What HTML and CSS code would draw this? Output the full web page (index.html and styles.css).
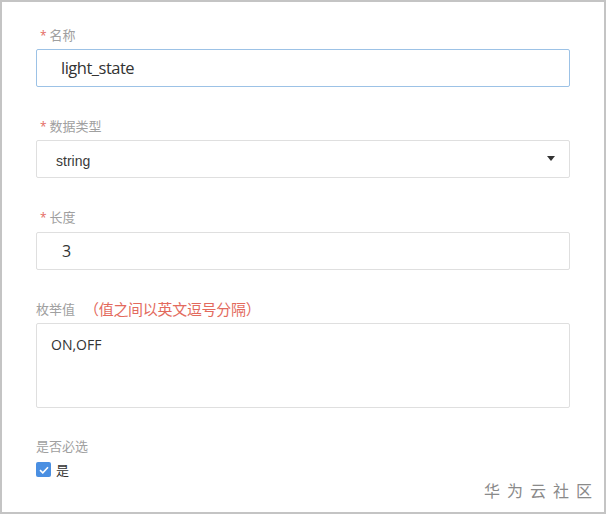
FILE: index.html
```html
<!DOCTYPE html>
<html lang="zh">
<head>
<meta charset="utf-8">
<link rel="stylesheet" href="styles.css">
</head>
<body>
<div class="frame">
  <div class="field">
    <div class="label"><span class="req">*</span>名称</div>
    <div class="input focused"><span class="value big">light_state</span></div>
  </div>
  <div class="field">
    <div class="label"><span class="req">*</span>数据类型</div>
    <div class="input select"><span class="value sel">string</span><span class="caret"></span></div>
  </div>
  <div class="field wide">
    <div class="label"><span class="req">*</span>长度</div>
    <div class="input"><span class="value num">3</span></div>
  </div>
  <div class="field">
    <div class="label">枚举值<span class="hint">（值之间以英文逗号分隔）</span></div>
    <div class="input area"><span class="value enum">ON,OFF</span></div>
  </div>
  <div class="field last">
    <div class="label">是否必选</div>
    <label class="check">
      <span class="box"><svg width="10" height="8" viewBox="0 0 10 8"><path d="M1 4.2 L3.8 6.8 L9 1.2" fill="none" stroke="#fff" stroke-width="1.6"/></svg></span>
      <span class="check-text">是</span>
    </label>
  </div>
  <div class="watermark">华为云社区</div>
</div>
</body>
</html>
```

FILE: styles.css
```css
html, body {
  margin: 0;
  padding: 0;
  background: #fff;
}
.frame {
  position: relative;
  box-sizing: border-box;
  width: 606px;
  height: 514px;
  border: 2px solid #c4c4c4;
  padding: 24px 34px 0 34px;
  font-family: "Noto Sans CJK SC", "Open Sans", sans-serif;
  display: flex;
  flex-direction: column;
  gap: 30px;
}
.field {
  display: flex;
  flex-direction: column;
  gap: 5px;
}
.field.wide {
  gap: 6px;
}
.label {
  height: 18px;
  line-height: 18px;
  font-size: 13px;
  color: #a0a0a0;
  display: flex;
  align-items: center;
}
.req {
  color: #e46a62;
  font-family: "Open Sans", sans-serif;
  font-size: 12px;
  margin: 0 3px 0 4px;
  position: relative;
  top: 1px;
}
.hint {
  color: #e36a5d;
  font-size: 15px;
  margin-left: 9px;
  letter-spacing: -0.3px;
}
.input {
  box-sizing: border-box;
  height: 38px;
  border: 1px solid #dfdfdf;
  border-radius: 2px;
  display: flex;
  align-items: center;
  background: #fff;
}
.input.focused {
  border-color: #9cc2e6;
}
.value {
  font-family: "Open Sans", "Noto Sans CJK SC", sans-serif;
  color: #333;
}
.value.big {
  font-size: 16.5px;
  padding-left: 24px;
  letter-spacing: -0.5px;
  margin-top: -1px;
}
.value.sel {
  font-size: 14px;
  padding-left: 19px;
  margin-top: 4px;
  font-family: "Liberation Sans", sans-serif;
  color: #3a3a3a;
}
.value.num {
  font-size: 16px;
  padding-left: 25px;
}
.select {
  justify-content: space-between;
  padding-right: 14px;
}
.caret {
  width: 0;
  height: 0;
  border-left: 4.5px solid transparent;
  border-right: 4.5px solid transparent;
  border-top: 5px solid #333;
  margin-top: -2px;
}
.area {
  height: 85px;
  align-items: flex-start;
}
.value.enum {
  font-size: 14px;
  padding-left: 14px;
  padding-top: 11px;
  line-height: 20px;
}
.field.last {
  gap: 5px;
  margin-top: -1px;
}
.check {
  display: flex;
  align-items: center;
  gap: 5px;
}
.box {
  width: 15px;
  height: 15px;
  background: #4a8fe2;
  border-radius: 2px;
  display: flex;
  align-items: center;
  justify-content: center;
}
.check-text {
  font-size: 13px;
  color: #333;
}
.watermark {
  position: absolute;
  right: 5px;
  bottom: 12px;
  font-size: 16px;
  letter-spacing: 7px;
  color: #8a8a8a;
  line-height: 20px;
}
```
